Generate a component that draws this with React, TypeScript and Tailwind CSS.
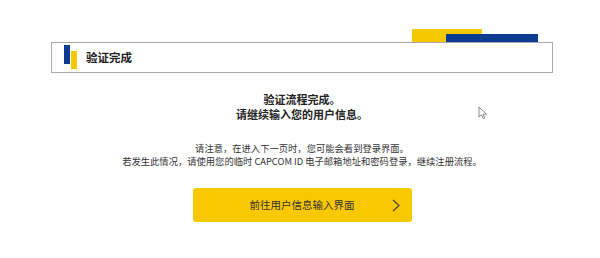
import React from "react";

export default function App() {
  return (
    <div
      className="relative w-[600px] h-[258px] bg-white overflow-hidden text-[#222]"
      style={{ fontFamily: '"Noto Sans CJK SC", "Noto Sans", sans-serif' }}
    >
      <div className="pt-[29px] pl-[51px] w-[553px]">
        {/* decorative bars */}
        <div className="flex items-end justify-end pr-[15px] h-[13px]">
          <div className="w-[70px] h-[13px] bg-[#f5c800]" />
          <div className="w-[92px] h-[8px] bg-[#0b3c91] -ml-[36px]" />
        </div>
        {/* header box */}
        <div className="h-[31px] border border-[#a9a9a9] flex items-center pl-[12px]">
          <div className="flex items-start h-[24px] -mt-[2px]">
            <div className="w-[6px] h-[19px] bg-[#0b3c91]" />
            <div className="w-[6px] h-[18px] mt-[6px] ml-[1px] bg-[#f5c800]" />
          </div>
          <span className="ml-[9px] text-[11.5px] font-semibold leading-none">验证完成</span>
        </div>
        {/* titles */}
        <div className="mt-[19px] text-center text-[11px] font-bold leading-[15px]">
          <div>验证流程完成。</div>
          <div>请继续输入您的用户信息。</div>
        </div>
        <div className="mt-[20px] text-center text-[9.3px] leading-[13px] text-[#333]">
          <div>请注意，在进入下一页时，您可能会看到登录界面。</div>
          <div>若发生此情况，请使用您的临时 CAPCOM ID 电子邮箱地址和密码登录，继续注册流程。</div>
        </div>
        <div className="mt-[20px] flex justify-center">
          <div className="relative w-[219px] h-[34px] rounded-[3px] bg-[#fac800] flex items-center justify-center">
            <span className="text-[10.5px] text-[#333] leading-none">前往用户信息输入界面</span>
            <svg
              className="absolute right-[12px] top-[11px]"
              width="8"
              height="13"
              viewBox="0 0 8 13"
              fill="none"
            >
              <path d="M1 1 L7 6.5 L1 12" stroke="#444" strokeWidth="1.2" />
            </svg>
          </div>
        </div>
      </div>
      {/* mouse cursor */}
      <svg
        className="absolute left-[478px] top-[106px]"
        width="10"
        height="14"
        viewBox="0 0 10 14"
        fill="none"
      >
        <path
          d="M1 1 L1 11 L3.5 8.8 L5.3 12.6 L6.8 11.9 L5 8.2 L8.5 8.2 Z"
          fill="#fff"
          stroke="#777"
          strokeWidth="0.9"
          strokeLinejoin="round"
        />
      </svg>
    </div>
  );
}
